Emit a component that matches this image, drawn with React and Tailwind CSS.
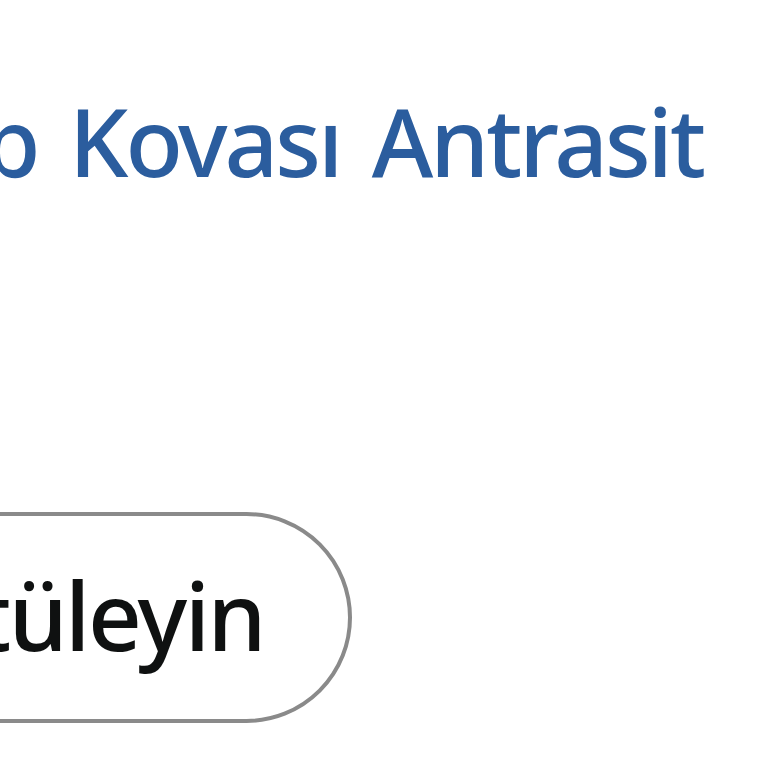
export default function App() {
    return (
        <div className="w-[768px] h-[768px] overflow-hidden bg-white" style={{ fontFamily: '"Noto Sans", "Open Sans", sans-serif' }}>
            <div className="mt-[94px] flex justify-end pr-[65px] overflow-hidden">
                <a className="whitespace-nowrap text-[94px] font-medium leading-none tracking-[-3px] [word-spacing:10px] text-[#2b5d9e]">
                    Fırçalı Çöp Kovası Antrasit
                </a>
            </div>
            <div className="mt-[324px] w-[352px] flex justify-end">
                <button className="shrink-0 whitespace-nowrap rounded-full border-4 border-[#8a8a8a] bg-white pl-[80px] pr-[84px] pt-[52px] pb-[57px] text-[94px] font-medium leading-none tracking-[-2.5px] text-[#0f1111]">
                    Görüntüleyin
                </button>
            </div>
        </div>
    )
}
